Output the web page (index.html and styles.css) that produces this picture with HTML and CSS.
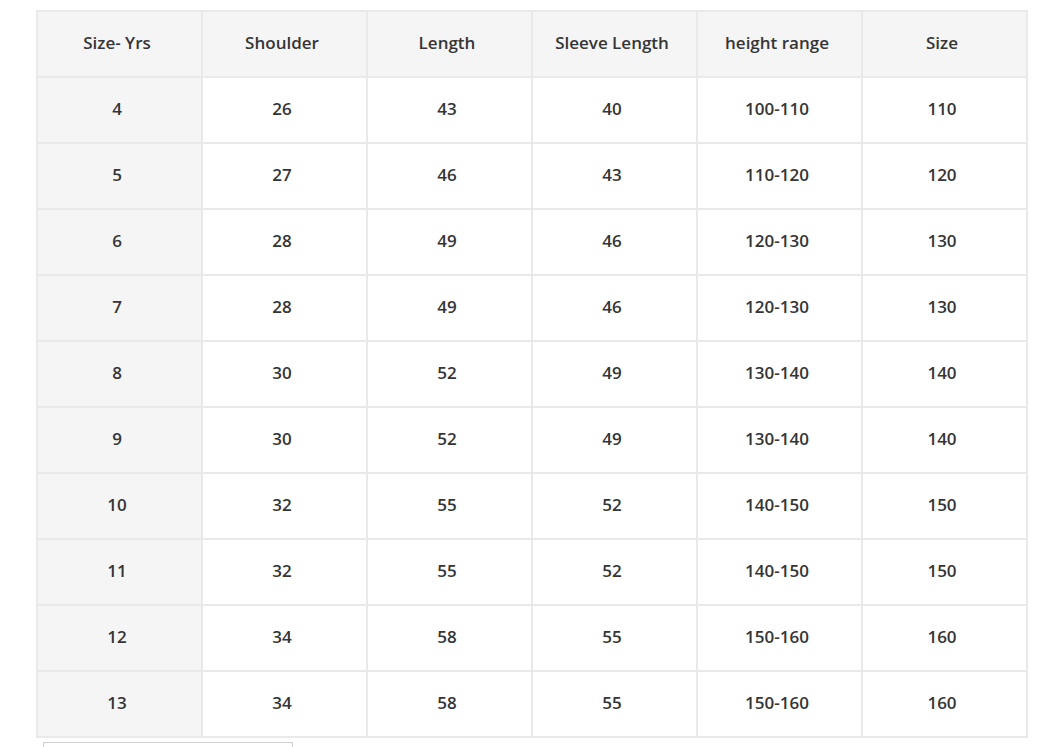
FILE: index.html
```html
<!DOCTYPE html>
<html>
<head>
<meta charset="utf-8">
<link rel="stylesheet" href="styles.css">
</head>
<body>
<div class="page">
  <div class="size-table" role="table">
    <div class="cell head first">Size- Yrs</div>
    <div class="cell head">Shoulder</div>
    <div class="cell head">Length</div>
    <div class="cell head">Sleeve Length</div>
    <div class="cell head">height range</div>
    <div class="cell head">Size</div>

    <div class="cell first">4</div><div class="cell">26</div><div class="cell">43</div><div class="cell">40</div><div class="cell">100-110</div><div class="cell">110</div>
    <div class="cell first">5</div><div class="cell">27</div><div class="cell">46</div><div class="cell">43</div><div class="cell">110-120</div><div class="cell">120</div>
    <div class="cell first">6</div><div class="cell">28</div><div class="cell">49</div><div class="cell">46</div><div class="cell">120-130</div><div class="cell">130</div>
    <div class="cell first">7</div><div class="cell">28</div><div class="cell">49</div><div class="cell">46</div><div class="cell">120-130</div><div class="cell">130</div>
    <div class="cell first">8</div><div class="cell">30</div><div class="cell">52</div><div class="cell">49</div><div class="cell">130-140</div><div class="cell">140</div>
    <div class="cell first">9</div><div class="cell">30</div><div class="cell">52</div><div class="cell">49</div><div class="cell">130-140</div><div class="cell">140</div>
    <div class="cell first">10</div><div class="cell">32</div><div class="cell">55</div><div class="cell">52</div><div class="cell">140-150</div><div class="cell">150</div>
    <div class="cell first">11</div><div class="cell">32</div><div class="cell">55</div><div class="cell">52</div><div class="cell">140-150</div><div class="cell">150</div>
    <div class="cell first">12</div><div class="cell">34</div><div class="cell">58</div><div class="cell">55</div><div class="cell">150-160</div><div class="cell">160</div>
    <div class="cell first">13</div><div class="cell">34</div><div class="cell">58</div><div class="cell">55</div><div class="cell">150-160</div><div class="cell">160</div>
  </div>
  <div class="below-box"></div>
</div>
</body>
</html>
```
FILE: styles.css
```css
html, body {
  margin: 0;
  padding: 0;
  background: #ffffff;
}
.page {
  padding: 10px 0 0 36px;
  font-family: "Open Sans", "Noto Sans", sans-serif;
}
.size-table {
  display: grid;
  grid-template-columns: repeat(6, 165px);
  grid-auto-rows: 66px;
  width: 992px;
  box-sizing: border-box;
  border-left: 2px solid #e9e9e9;
  border-top: 2px solid #e9e9e9;
}
.cell {
  box-sizing: border-box;
  border-right: 2px solid #e9e9e9;
  border-bottom: 2px solid #e9e9e9;
  padding: 0 5px 4px 0;
  display: flex;
  align-items: center;
  justify-content: center;
  font-size: 17px;
  font-weight: 600;
  color: #353535;
  background: #ffffff;
}
.cell.head, .cell.first {
  background: #f5f5f5;
}
.below-box {
  margin: 4px 0 0 7px;
  width: 250px;
  height: 20px;
  box-sizing: border-box;
  border: 1px solid #cfcfcf;
  border-bottom: none;
}
```
